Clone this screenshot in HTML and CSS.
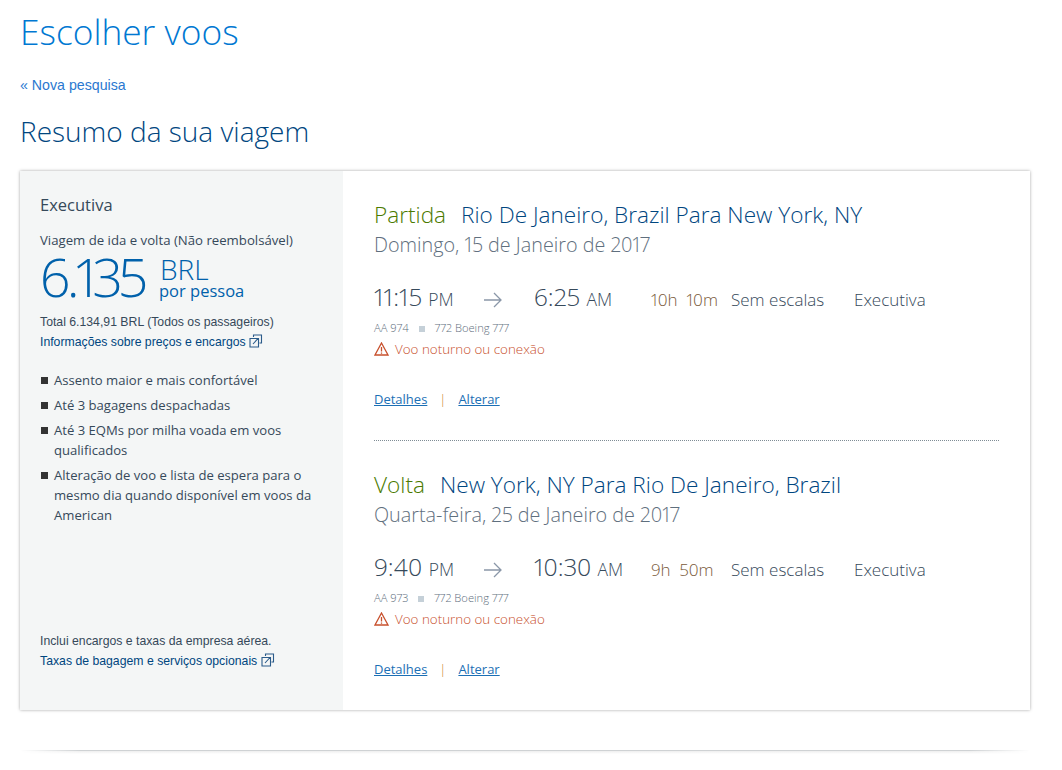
FILE: index.html
```html
<!DOCTYPE html>
<html lang="pt">
  <head>
    <meta charset="UTF-8" />
    <title>Escolher voos</title>
    <link rel="stylesheet" href="styles.css">
  </head>
  <body>
    <h1>Escolher voos</h1>
    <a class="back-link" href="#">« Nova pesquisa</a>
    <h2>Resumo da sua viagem</h2>

    <div class="card">
      <div class="fare">
        <div class="fare-top">
          <div class="fare-name">Executiva</div>
          <div class="fare-type">Viagem de ida e volta (Não reembolsável)</div>
          <div class="price">
            <span class="price-value">6.135</span>
            <div class="price-unit">
              <span class="currency">BRL</span>
              <span class="per">por pessoa</span>
            </div>
          </div>
          <div class="small-text total">Total 6.134,91 BRL (Todos os passageiros)</div>
          <a class="small-text small-link" href="#">Informações sobre preços e encargos
            <svg class="ext" width="14" height="14" viewBox="0 0 14 14"><path d="M4.500 3V1h8v8h-2M1 4.500h8.500V13H1z M4 10l5-5.500M5.500 4.500H9.500V8.500" fill="none" stroke="#2a5b8a" stroke-width="1.100"/></svg>
          </a>
          <ul class="perks">
            <li>Assento maior e mais confortável</li>
            <li>Até 3 bagagens despachadas</li>
            <li>Até 3 EQMs por milha voada em voos qualificados</li>
            <li>Alteração de voo e lista de espera para o mesmo dia quando disponível em voos da American</li>
          </ul>
        </div>
        <div class="fare-bottom">
          <div class="small-text total">Inclui encargos e taxas da empresa aérea.</div>
          <a class="small-text small-link" href="#">Taxas de bagagem e serviços opcionais
            <svg class="ext" width="14" height="14" viewBox="0 0 14 14"><path d="M4.500 3V1h8v8h-2M1 4.500h8.500V13H1z M4 10l5-5.500M5.500 4.500H9.500V8.500" fill="none" stroke="#2a5b8a" stroke-width="1.100"/></svg>
          </a>
        </div>
      </div>

      <div class="trips">
        <div class="trip">
          <div class="trip-title"><span class="leg">Partida</span>Rio De Janeiro, Brazil Para New York, NY</div>
          <div class="trip-date">Domingo, 15 de Janeiro de 2017</div>
          <div class="times">
            <div class="time-col dep"><span class="time">11:15</span> <span class="ampm">PM</span></div>
            <svg class="arrow" width="20" height="16" viewBox="0 0 20 16"><path d="M1 8h17M11 1l7 7-7 7" fill="none" stroke="#8a97a8" stroke-width="1.300"/></svg>
            <div class="time-col arr"><span class="time">6:25</span> <span class="ampm">AM</span></div>
            <div class="duration">10h&nbsp; 10m</div>
            <div class="stops">Sem escalas</div>
            <div class="cabin">Executiva</div>
          </div>
          <div class="flight-info">AA 974<span class="dot"></span>772 Boeing 777</div>
          <div class="warning">
            <svg width="15" height="14" viewBox="0 0 15 14"><path d="M7.500 1L14 13H1z" fill="none" stroke="#c8502d" stroke-width="1.300"/><path d="M7.500 5v4.500M7.500 10.500v1.300" stroke="#c8502d" stroke-width="1.300"/></svg>
            Voo noturno ou conexão
          </div>
          <div class="actions"><a href="#">Detalhes</a><span class="sep">|</span><a href="#">Alterar</a></div>
        </div>

        <div class="trip return">
          <div class="trip-title"><span class="leg">Volta</span>New York, NY Para Rio De Janeiro, Brazil</div>
          <div class="trip-date">Quarta-feira, 25 de Janeiro de 2017</div>
          <div class="times">
            <div class="time-col dep"><span class="time">9:40</span> <span class="ampm">PM</span></div>
            <svg class="arrow" width="20" height="16" viewBox="0 0 20 16"><path d="M1 8h17M11 1l7 7-7 7" fill="none" stroke="#8a97a8" stroke-width="1.300"/></svg>
            <div class="time-col arr"><span class="time">10:30</span> <span class="ampm">AM</span></div>
            <div class="duration">9h&nbsp; 50m</div>
            <div class="stops">Sem escalas</div>
            <div class="cabin">Executiva</div>
          </div>
          <div class="flight-info">AA 973<span class="dot"></span>772 Boeing 777</div>
          <div class="warning">
            <svg width="15" height="14" viewBox="0 0 15 14"><path d="M7.500 1L14 13H1z" fill="none" stroke="#c8502d" stroke-width="1.300"/><path d="M7.500 5v4.500M7.500 10.500v1.300" stroke="#c8502d" stroke-width="1.300"/></svg>
            Voo noturno ou conexão
          </div>
          <div class="actions"><a href="#">Detalhes</a><span class="sep">|</span><a href="#">Alterar</a></div>
        </div>
      </div>
    </div>

    <div class="footer-line"></div>
  </body>
</html>
```

FILE: styles.css
```css
body {
  font-family: "Open Sans", sans-serif;
  font-weight: 300;
  font-variant-numeric: proportional-nums;
  margin: 0;
  padding: 0 32px 0 20px;
  background: #fff;
  color: #36495a;
}

a {
  color: #1b6fb5;
}

h1 {
  margin: 0;
  padding-top: 8px;
  font-size: 35.300px;
  line-height: 46px;
  font-weight: 300;
  color: #0078d2;
}

.back-link {
  display: block;
  margin-top: 22px;
  font-family: "Liberation Sans", sans-serif;
  font-weight: 400;
  font-size: 14.200px;
  line-height: 18px;
  color: #2a78d0;
  text-decoration: none;
}

h2 {
  margin: 18px 0 0;
  font-size: 28px;
  line-height: 38px;
  font-weight: 300;
  color: #00467f;
}

.card {
  display: flex;
  margin-top: 21px;
  height: 539px;
  background: #fff;
  box-shadow: 0 0 3px rgba(0, 0, 0, 0.35);
}

.fare {
  width: 323px;
  box-sizing: border-box;
  padding: 23px 20px 0 20px;
  background: #f4f6f6;
  display: flex;
  flex-direction: column;
  justify-content: space-between;
}

.fare-name {
  font-size: 16.500px;
  line-height: 22px;
  font-weight: 400;
  color: #36495a;
}

.fare-type {
  margin-top: 15px;
  font-size: 13.200px;
  line-height: 18px;
  font-weight: 400;
  color: #36495a;
}

.price {
  display: flex;
  color: #0061ab;
  height: 54px;
}

.price-value {
  font-size: 54px;
  line-height: 54px;
  letter-spacing: -3.800px;
}

.price-unit {
  display: flex;
  flex-direction: column;
  margin-left: 16px;
}

.currency {
  font-size: 28px;
  line-height: 28px;
  margin-top: 6px;
}

.per {
  font-size: 16.500px;
  line-height: 16px;
  font-weight: 400;
  margin-left: -1px;
}

.small-text {
  font-family: "Liberation Sans", sans-serif;
  font-weight: 400;
  font-size: 12.250px;
  line-height: 20px;
}

.total {
  color: #36495a;
}

.fare-top .total {
  margin-top: 9px;
}

.small-link {
  display: block;
  color: #00467f;
  text-decoration: none;
}

.ext {
  vertical-align: -2px;
}

.perks {
  list-style: none;
  margin: 18px 0 0;
  padding: 0;
  font-size: 13.100px;
  line-height: 20px;
  font-weight: 400;
}

.perks li {
  position: relative;
  padding-left: 14px;
  margin-bottom: 5px;
}

.perks li::before {
  content: "";
  position: absolute;
  left: 1px;
  top: 7px;
  width: 7px;
  height: 7px;
  background: #333;
}

.fare-bottom {
  padding-bottom: 39px;
}

.trips {
  flex: 1;
  padding: 0 31px 0 31px;
}

.trip {
  height: 269px;
  box-sizing: border-box;
  padding-top: 29px;
}

.trip.return {
  border-top: 1px dotted #7f8c95;
}

.trip-title {
  font-size: 22.600px;
  line-height: 30px;
  color: #00467f;
}

.leg {
  color: #4b7a00;
  margin-right: 15px;
}

.trip-date {
  font-size: 19.800px;
  line-height: 30px;
  color: #5f6f7e;
}

.times {
  display: flex;
  align-items: baseline;
  margin-top: 20px;
  height: 40px;
  font-size: 17px;
  font-weight: 300;
}

.time-col {
  color: #36495a;
  white-space: nowrap;
}

.dep {
  width: 110px;
}

.arr {
  width: 117px;
  margin-left: 31px;
}

.arrow {
  align-self: center;
  margin-left: -1px;
}

.time {
  font-size: 24.500px;
}

.ampm {
  font-size: 17.500px;
  margin-left: 2px;
}

.duration {
  width: 80px;
  color: #7a5a3a;
}

.stops {
  width: 123px;
}

.flight-info {
  font-size: 11.200px;
  line-height: 16px;
  color: #5f6f7e;
}

.dot {
  display: inline-block;
  width: 6px;
  height: 6px;
  margin: 0 10px;
  background: #c5d0d8;
}

.warning {
  margin-top: 3px;
  display: flex;
  align-items: center;
  gap: 6px;
  font-size: 13.400px;
  line-height: 20px;
  color: #c8502d;
}

.actions {
  margin-top: 30px;
  font-size: 13px;
  line-height: 20px;
  font-weight: 400;
}

.sep {
  margin: 0 12px;
  color: #c8782d;
  font-weight: 300;
}

.footer-line {
  margin-top: 40px;
  height: 4px;
  background: linear-gradient(to bottom, #cfd2d4 1px, #eeeeee 1px, #fff);
  -webkit-mask-image: linear-gradient(to right, transparent, #000 6%, #000 94%, transparent);
  mask-image: linear-gradient(to right, transparent, #000 6%, #000 94%, transparent);
}
```
